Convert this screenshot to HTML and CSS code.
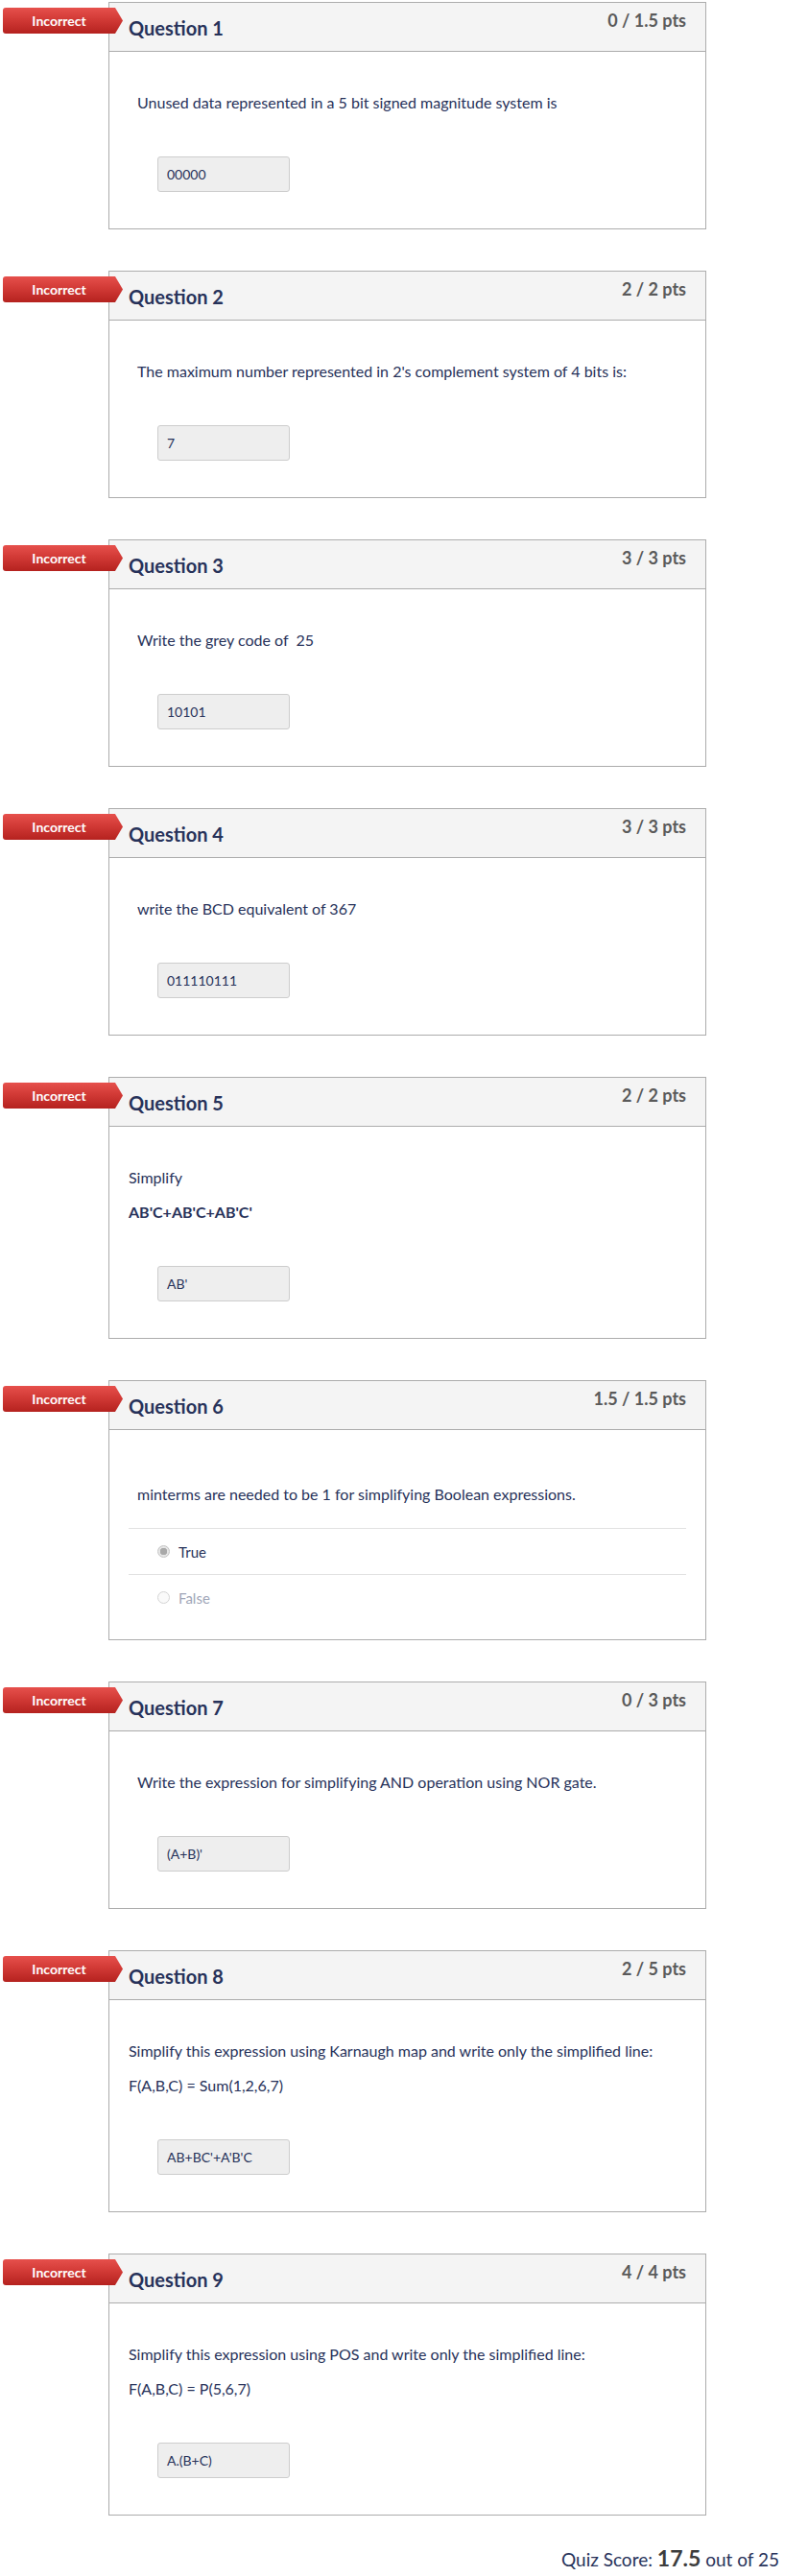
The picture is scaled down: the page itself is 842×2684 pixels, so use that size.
FILE: index.html
```html
<!DOCTYPE html>
<html>
<head>
<meta charset="utf-8">
<link rel="stylesheet" href="styles.css">
</head>
<body>
<main class="quiz">

  <section class="question">
    <div class="badge">Incorrect</div>
    <header class="qhead"><h2 class="qtitle">Question 1</h2><span class="pts">0 / 1.5 pts</span></header>
    <div class="qbody">
      <div class="qtext"><p>Unused data represented in a 5 bit signed magnitude system is</p></div>
      <div class="answer"><div class="field">00000</div></div>
    </div>
  </section>

  <section class="question">
    <div class="badge">Incorrect</div>
    <header class="qhead"><h2 class="qtitle">Question 2</h2><span class="pts">2 / 2 pts</span></header>
    <div class="qbody">
      <div class="qtext"><p>The maximum number represented in 2's complement system of 4 bits is:</p></div>
      <div class="answer"><div class="field">7</div></div>
    </div>
  </section>

  <section class="question">
    <div class="badge">Incorrect</div>
    <header class="qhead"><h2 class="qtitle">Question 3</h2><span class="pts">3 / 3 pts</span></header>
    <div class="qbody">
      <div class="qtext"><p>Write the grey code of&nbsp; 25</p></div>
      <div class="answer"><div class="field">10101</div></div>
    </div>
  </section>

  <section class="question">
    <div class="badge">Incorrect</div>
    <header class="qhead"><h2 class="qtitle">Question 4</h2><span class="pts">3 / 3 pts</span></header>
    <div class="qbody">
      <div class="qtext"><p>write the BCD equivalent of 367</p></div>
      <div class="answer"><div class="field">011110111</div></div>
    </div>
  </section>

  <section class="question">
    <div class="badge">Incorrect</div>
    <header class="qhead"><h2 class="qtitle">Question 5</h2><span class="pts">2 / 2 pts</span></header>
    <div class="qbody">
      <div class="qtext qtext-flush"><p>Simplify</p><p><strong>AB'C+AB'C+AB'C'</strong></p></div>
      <div class="answer"><div class="field">AB'</div></div>
    </div>
  </section>

  <section class="question">
    <div class="badge">Incorrect</div>
    <header class="qhead"><h2 class="qtitle">Question 6</h2><span class="pts">1.5 / 1.5 pts</span></header>
    <div class="qbody qbody-choice">
      <div class="qtext"><p>minterms are needed to be 1 for simplifying Boolean expressions.</p></div>
      <div class="choices">
        <div class="choice selected"><span class="radio"></span><span class="label">True</span></div>
        <div class="choice"><span class="radio"></span><span class="label">False</span></div>
      </div>
    </div>
  </section>

  <section class="question">
    <div class="badge">Incorrect</div>
    <header class="qhead"><h2 class="qtitle">Question 7</h2><span class="pts">0 / 3 pts</span></header>
    <div class="qbody">
      <div class="qtext"><p>Write the expression for simplifying AND operation using NOR gate.</p></div>
      <div class="answer"><div class="field">(A+B)'</div></div>
    </div>
  </section>

  <section class="question">
    <div class="badge">Incorrect</div>
    <header class="qhead"><h2 class="qtitle">Question 8</h2><span class="pts">2 / 5 pts</span></header>
    <div class="qbody">
      <div class="qtext qtext-flush"><p>Simplify this expression using Karnaugh map and write only the simplified line:</p><p>F(A,B,C) = Sum(1,2,6,7)</p></div>
      <div class="answer"><div class="field">AB+BC'+A'B'C</div></div>
    </div>
  </section>

  <section class="question">
    <div class="badge">Incorrect</div>
    <header class="qhead"><h2 class="qtitle">Question 9</h2><span class="pts">4 / 4 pts</span></header>
    <div class="qbody">
      <div class="qtext qtext-flush"><p>Simplify this expression using POS and write only the simplified line:</p><p>F(A,B,C) = P(5,6,7)</p></div>
      <div class="answer"><div class="field">A.(B+C)</div></div>
    </div>
  </section>

  <div class="score">Quiz Score: <strong>17.5</strong> out of 25</div>
</main>
</body>
</html>
```
FILE: styles.css
```css
html, body {
  margin: 0;
  padding: 0;
  background: #ffffff;
}

body {
  font-family: "Lato", "Noto Sans", sans-serif;
  color: #27325a;
}

.quiz {
  padding-top: 2px;
}

.question {
  position: relative;
  width: 621px;
  margin: 0 0 43px 113px;
  border: 1px solid #acacac;
  background: #fff;
}

.question:last-of-type {
  margin-bottom: 0;
}

.badge {
  position: absolute;
  left: -111px;
  top: 5px;
  width: 125px;
  height: 27px;
  box-sizing: border-box;
  padding-right: 8px;
  display: flex;
  align-items: center;
  justify-content: center;
  color: #fff;
  font-weight: 700;
  font-size: 14px;
  border-radius: 3px 0 0 3px;
  background: linear-gradient(to bottom, #e6504c 0%, #d23a36 45%, #b5221f 100%);
  clip-path: polygon(0 0, calc(100% - 8px) 0, 100% 50%, calc(100% - 8px) 100%, 0 100%);
}

.qhead {
  height: 51px;
  box-sizing: border-box;
  background: #f4f4f4;
  border-bottom: 1px solid #acacac;
  display: flex;
  justify-content: space-between;
  align-items: flex-start;
  padding: 0 20px;
}

.qtitle {
  margin: 14px 0 0;
  font-size: 20px;
  line-height: 24px;
  font-weight: 700;
  color: #27325a;
}

.pts {
  margin-top: 7px;
  font-size: 18px;
  line-height: 22px;
  font-weight: 700;
  color: #5a5a5a;
}

.qbody {
  padding: 41px 20px 38px;
}

.qtext {
  padding: 0 9px;
}

.qtext-flush {
  padding: 0;
}

.qtext p {
  margin: 0;
  font-size: 16px;
  line-height: 24px;
}

.qtext p + p {
  margin-top: 12px;
}

.answer {
  margin: 44px 0 0 30px;
}

.field {
  width: 138px;
  height: 37px;
  box-sizing: border-box;
  background: #eeeeee;
  border: 1px solid #cdcdcd;
  border-radius: 3px;
  padding: 0 9px;
  display: flex;
  align-items: center;
  font-size: 14px;
  color: #27325a;
}

.qbody-choice {
  padding-top: 55px;
  padding-bottom: 20px;
}

.choices {
  margin-top: 23px;
}

.choice {
  height: 48px;
  box-sizing: border-box;
  border-top: 1px solid #e2e2e2;
  display: flex;
  align-items: center;
  padding-left: 30px;
  gap: 9px;
  font-size: 15px;
  color: #a0a6b8;
}

.choice.selected {
  color: #27325a;
}

.radio {
  width: 13px;
  height: 13px;
  box-sizing: border-box;
  border-radius: 50%;
  border: 1px solid #d4d4d4;
  background: #fafafa;
}

.choice.selected .radio {
  border-color: #c4c4c4;
  background: radial-gradient(circle, #a9a9a9 0 3.5px, #e6e6e6 4px 100%);
}

.score {
  text-align: right;
  padding-right: 30px;
  margin-top: 30px;
  font-size: 19px;
  line-height: 28px;
  color: #27325a;
}

.score strong {
  font-size: 23px;
  line-height: 28px;
  color: #3d3d3d;
}
```
